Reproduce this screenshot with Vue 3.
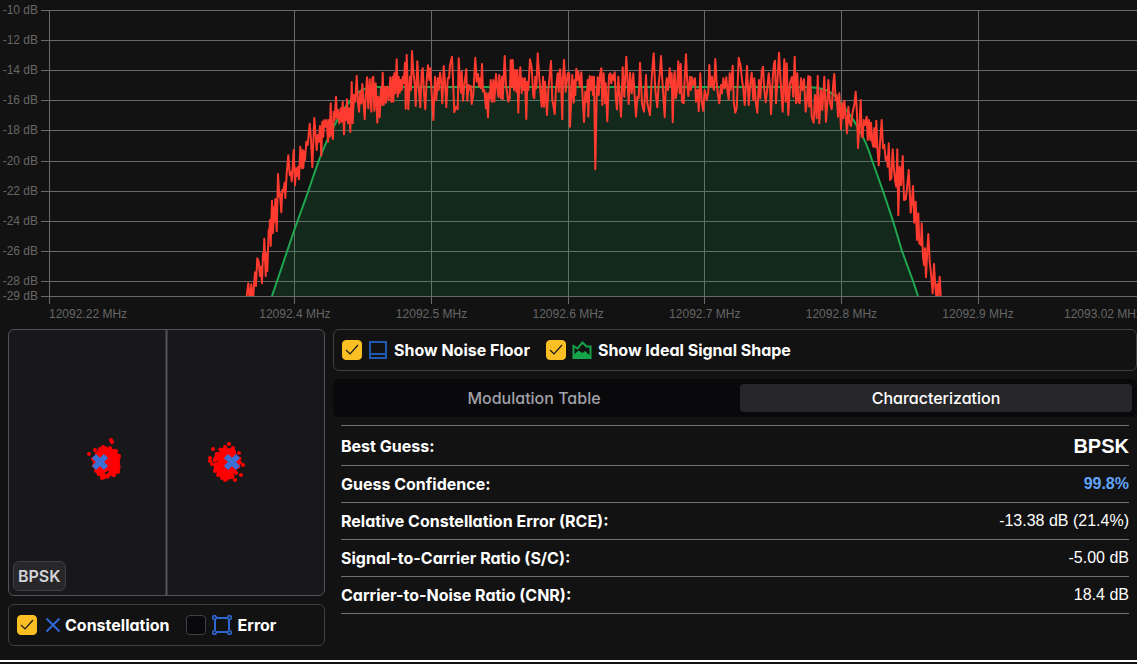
<script setup>
import { computed, ref } from 'vue'

// ── Axes ──────────────────────────────────────────────────────────────
const PLOT_W = 1093
const PLOT_H = 286
const freqMin = 12092.22
const freqMax = 12093.02
const dbMax = -10
const dbMin = -29

const freqTicks = [12092.22, 12092.4, 12092.5, 12092.6, 12092.7, 12092.8, 12092.9, 12093.02]
const dbTicks = [-10, -12, -14, -16, -18, -20, -22, -24, -26, -28, -29]

const freqPos = (f) => `${((f - freqMin) / (freqMax - freqMin)) * 100}%`
const dbPos = (db) => Math.round(((dbMax - db) / (dbMax - dbMin)) * PLOT_H)

function anchor(i) {
  if (i === 0) return 'start'
  return i === freqTicks.length - 1 ? 'end' : 'middle'
}

const sweeps = [
  {
    origin: [191, 30],
    samples: `20,768 25,730 28,768 31,768 34,733 37,768 40,768 42,735 45,697 48,738 52,655 56,665 60,708 62,680 66,730 69,640
    71,660 73,596 77,708 79,640 82,693 86,570 88,585 90,540 92,618 96,482 99,580 102,500 104,545 106,477 110,574 114,402
    118,470 120,460 124,517 127,450 130,455 134,428 136,474 140,400 145,346 149,405 152,395 155,424 157,400 161,330 165,436
    168,385 171,408 174,380 177,418 181,320 185,385 188,330 190,384 193,335 195,360 199,305 203,315 209,251 213,300 217,382
    223,234 227,290 230,330 233,285 236,305 240,258 244,347 247,245 250,290 253,240 257,260 260,240 264,305 267,240 269,290
    272,190 275,280 279,297 281,215 284,240 288,170 291,235 294,210 298,250 302,205 305,245 308,185 312,283 315,205 318,240
    321,178 324,250 327,205 331,276 335,126 338,250 342,165 346,185 350,108 354,190 357,215 361,155 364,190 367,132 374,238
    377,170 381,112 385,205 389,118 394,215 397,115 400,110 403,212 407,130 412,248 415,170 419,232 423,145 425,195 428,98
    431,195 435,140 438,188 441,140 446,180 451,112 454,185 458,110 460,185 463,100 466,160 470,58 473,170 476,110 479,158
    482,120 485,150 488,110 491,130 495,68 497,206 500,45 505,208 510,110 513,150 516,33 520,95 524,130 527,198 532,64
    536,140 541,202 545,95 548,85 552,160 556,208 560,120 564,76 568,120 571,85 575,160 580,240 585,110 589,180 593,115
    596,150 600,98 604,130 607,190 611,78 615,130 619,202 623,115 627,115 630,75 636,50 640,140 643,217 648,200 653,208`
  },
  {
    origin: [391, 30],
    samples: `56,55 60,130 63,158 65,95 69,182 73,135 79,88 82,182 86,135 90,150 92,138 95,192 100,165 106,53 110,125 114,102
    117,140 121,115 123,145 126,72 129,155 133,150 138,205 140,160 144,232 147,160 150,175 152,120 156,185 160,120 163,185
    168,102 171,135 175,170 178,105 182,175 186,110 188,178 194,48 198,135 205,185 209,175 212,60 216,140 218,60 222,150
    226,90 229,155 232,90 235,218 238,125 241,82 245,160 248,115 252,150 255,115 259,237 262,125 265,150 270,58 275,85
    280,168 283,175 286,110 289,145 293,40 298,115 302,165 305,200 309,110 312,200 315,125 321,225 325,150 333,63 337,180
    340,195 344,222 348,145 353,100 356,155 360,88 363,120 367,238 369,115 372,60 377,155 383,100 388,100 390,260 394,175
    397,105 401,188 404,120 406,165 409,86 412,120 415,95 419,140 424,97 428,175 432,246 436,155 440,185 443,120 445,230
    449,108 452,150 456,110 459,165 462,110 466,388 470,165 473,112 476,165 480,105 484,85 487,195 491,100 495,190 497,130
    502,244 507,105 511,100 514,130 518,105 521,120 524,97 527,170 531,208 535,110 539,170 543,230 548,82 553,170 559,50
    566,192 570,98 575,160 580,100 584,170 588,230 592,170 596,175 600,68 606,190 612,215 618,105 622,190 630,226 635,115
    641,40 646,150 652,202`
  },
  {
    origin: [591, 30],
    samples: `56,130 60,95 63,48 67,120 74,232 77,150 80,115 84,150 89,85 93,140 95,100 98,247 102,115 104,95 107,175 111,150
    115,64 119,160 122,72 126,185 131,190 134,115 138,43 142,130 145,168 150,110 153,150 156,112 160,135 165,115 168,185
    173,150 176,214 181,100 185,185 190,212 194,150 200,180 205,155 208,75 212,140 216,110 219,140 222,150 226,57 230,130
    234,165 238,190 243,135 246,160 250,115 254,145 259,112 263,160 266,178 269,100 272,150 278,77 281,185 286,218 290,205
    296,53 302,80 306,120 310,145 314,195 321,78 326,195 331,130 335,98 340,180 343,115 347,185 352,218 357,120 361,175
    365,95 369,80 373,150 377,187 382,145 386,100 390,140 393,223 398,115 402,70 405,62 408,190 413,110 417,38 422,130
    428,215 433,58 437,185 440,70 445,225 450,130 456,110 460,170 464,50 468,190 472,100 475,185 479,190 483,115 487,150
    492,118 497,215 501,180 505,108 508,200 511,110 515,230 521,248 525,165 530,235 533,108 538,250 543,150 547,210
    553,110 558,245 562,190 565,120 570,190 575,208 580,130 583,102 587,180 590,165 594,230 598,160 603,268 607,190
    610,235 613,182 617,230 621,280 625,200 629,250 633,258 638,215 643,195 647,155 651,220 654,324`
  },
  {
    origin: [751, 50],
    samples: `178,200 182,120 185,230 188,232 191,180 195,195 200,170 203,240 207,180 211,240 213,188 217,245 220,260 223,205
    226,262 229,182 232,260 236,316 240,250 245,180 249,265 253,255 257,300 261,290 263,320 266,250 270,360 274,355 278,268
    282,330 286,365 289,380 292,268 295,466 299,320 303,375 308,288 312,420 317,418 321,385 326,330 332,458 336,420 339,378
    343,488 347,425 351,540 355,460 358,550 363,555 365,490 369,590 372,615 375,565 378,652 382,570 385,522 389,605 393,640
    398,700 402,612 406,680 409,708 412,672 415,708 419,650 422,708`
  }
]

const spectrumPoints = sweeps
  .flatMap(({ origin, samples }) =>
    samples.trim().split(/\s+/).map((pair) => {
      const [x, y] = pair.split(',').map(Number)
      return `${(origin[0] + x / 3).toFixed(1)},${(origin[1] + y / 3).toFixed(1)}`
    })
  )
  .join(' ')

// ── Ideal raised-cosine shape ─────────────────────────────────────────
const idealCurve =
  'M223 286 L246 218 L259 182 Q265 164 270 150 Q277 132 283 120 Q292 102 301 91 Q311 77 326 77 ' +
  'L756 77 Q768 77 777 80 Q788 85 793 95 Q803 106 809 118 Q817 131 823 150 L834 181 L844 211 L853 241 L864 271 L869 286'

// ── Constellation ─────────────────────────────────────────────────────
let seed = 11
function rand() {
  seed = (seed * 16807) % 2147483647
  return seed / 2147483647
}

function cluster(cx, cy, rx, ry, count) {
  return Array.from({ length: count }, () => {
    const angle = rand() * Math.PI * 2
    const r = Math.pow(rand(), 0.7)
    return [cx + Math.cos(angle) * r * rx, cy + Math.sin(angle) * r * ry]
  })
}

const symbols = [
  ...cluster(98, 133, 13, 15, 240),
  ...cluster(218, 133, 13, 16, 200),
  [80, 124], [86, 120], [102, 110], [103, 112], [107, 121], [108, 125], [110, 126], [109, 142], [94, 117], [91, 119],
  [84, 129], [101, 118], [93, 148], [204, 119], [201, 128], [201, 131], [203, 134], [220, 114], [216, 117], [224, 118],
  [230, 123], [234, 135], [232, 145], [226, 150], [216, 150], [213, 148], [209, 145], [206, 141]
]
const idealSymbols = [[91, 132], [223, 132]]

const showNoiseFloor = ref(true)
const showIdealShape = ref(true)
const showConstellation = ref(true)
const showError = ref(false)

// ── Tabs ──────────────────────────────────────────────────────────────
const tabs = ['Modulation Table', 'Characterization']
const activeTab = ref('Characterization')

const modulation = ref('BPSK')
const rows = computed(() => [
  { label: 'Best Guess:', value: modulation.value, kind: 'best' },
  { label: 'Guess Confidence:', value: '99.8%', kind: 'confidence' },
  { label: 'Relative Constellation Error (RCE):', value: '-13.38 dB (21.4%)' },
  { label: 'Signal-to-Carrier Ratio (S/C):', value: '-5.00 dB' },
  { label: 'Carrier-to-Noise Ratio (CNR):', value: '18.4 dB' }
])
</script>

<template>
  <main class="analyzer">
    <div class="spectrum">
      <svg class="plot" role="img" aria-label="Signal spectrum">
        <g class="grid">
          <line v-for="db in dbTicks" :key="db" x1="-8" x2="100%" :y1="dbPos(db)" :y2="dbPos(db)" />
          <line v-for="f in freqTicks" :key="f" :x1="freqPos(f)" :x2="freqPos(f)" y1="0" y2="294" />
        </g>
        <svg width="100%" :height="PLOT_H" :viewBox="`0 0 ${PLOT_W} ${PLOT_H}`" preserveAspectRatio="none">
          <template v-if="showIdealShape">
            <path class="ideal-fill" :d="idealCurve + ' Z'" />
            <path class="ideal-line" :d="idealCurve" />
          </template>
          <polyline class="trace" :points="spectrumPoints" />
        </svg>
        <g class="ticks">
          <text v-for="db in dbTicks" :key="db" x="-11" :y="dbPos(db) + 4" text-anchor="end">{{ db }} dB</text>
          <text v-for="(f, i) in freqTicks" :key="f" :x="freqPos(f)" y="308" :text-anchor="anchor(i)">{{ f }} MHz</text>
        </g>
      </svg>
    </div>

    <div class="details">
      <section class="column">
        <div class="constellation">
          <svg viewBox="0 0 315 265" role="img" aria-label="Constellation diagram">
            <line class="axis" x1="157.500" x2="157.500" y1="0" y2="265" />
            <circle v-for="([x, y], i) in symbols" :key="i" class="symbol" :cx="x" :cy="y" r="2" />
            <g v-if="showConstellation" class="ideal-symbol">
              <path v-for="([x, y], i) in idealSymbols" :key="i" :d="`M${x - 6} ${y - 6}l12 12m0 -12l-12 12`" />
            </g>
          </svg>
          <span class="badge">{{ modulation }}</span>
        </div>

        <div class="options">
          <label class="option">
            <input v-model="showConstellation" type="checkbox" />
            <svg class="icon small blue" viewBox="0 0 16 16"><path d="M1.500 1.500l13 13m0-13l-13 13" /></svg>
            <span>Constellation</span>
          </label>
          <label class="option">
            <input v-model="showError" type="checkbox" />
            <svg class="icon blue" viewBox="0 0 20 20">
              <path d="M5 3h10M5 17h10M3 5v10M17 5v10" />
              <g class="handles">
                <circle cx="2.500" cy="2.500" r="1.800" /><circle cx="17.500" cy="2.500" r="1.800" />
                <circle cx="2.500" cy="17.500" r="1.800" /><circle cx="17.500" cy="17.500" r="1.800" />
              </g>
            </svg>
            <span>Error</span>
          </label>
        </div>
      </section>

      <section class="column">
        <div class="options">
          <label class="option">
            <input v-model="showNoiseFloor" type="checkbox" />
            <svg class="icon floor" viewBox="0 0 20 20"><path d="M2 2h16v16H2zM2 14h16" /></svg>
            <span>Show Noise Floor</span>
          </label>
          <label class="option">
            <input v-model="showIdealShape" type="checkbox" />
            <svg class="icon shape" viewBox="0 0 20 20">
              <path class="outline" d="M1.500 6l4 2.500 5-6 4 4h4v11.500h-17z" />
              <path class="area" d="M1.500 15l5-4.500 4 2.500 2.500-2 5.500 5v2h-17z" />
            </svg>
            <span>Show Ideal Signal Shape</span>
          </label>
        </div>

        <div class="tabs" role="tablist">
          <button
            v-for="tab in tabs"
            :key="tab"
            type="button"
            role="tab"
            :aria-selected="activeTab === tab"
            :class="{ active: activeTab === tab }"
            @click="activeTab = tab"
          >
            {{ tab }}
          </button>
        </div>

        <div class="table-wrap">
          <table>
            <tbody>
              <tr v-for="row in rows" :key="row.label" :class="row.kind">
                <th scope="row">{{ row.label }}</th>
                <td>{{ row.value }}</td>
              </tr>
            </tbody>
          </table>
        </div>
      </section>
    </div>
  </main>
</template>

<style>
body {
  background: #121212;
}
</style>

<style scoped>
.analyzer {
  background: #121212;
  color: #fff;
  font-family: Inter, 'Liberation Sans', sans-serif;
  font-size: 16px;
  line-height: 24px;
  border-bottom: 2px solid #fff;
  overflow: hidden;
}

/* ── Spectrum ─── */
.spectrum {
  padding: 10px 0 0 49px;
  margin-right: -5px;
}
.plot {
  display: block;
  width: 100%;
  height: 319px;
  overflow: visible;
}
.grid line {
  stroke: #6a6a6a;
  stroke-width: 1;
  shape-rendering: crispEdges;
}
.ideal-fill { fill: #16a34a; fill-opacity: .16; }
.ideal-line { fill: none; stroke: #1fa750; stroke-width: 2; }
.trace {
  fill: none;
  stroke: #ff3b30;
  stroke-width: 2;
  stroke-linejoin: round;
}
.ticks text {
  fill: #666;
  font-family: 'Liberation Sans', sans-serif;
  font-size: 12px;
}

/* ── Lower panels ─── */
.details {
  display: grid;
  grid-template-columns: 317px minmax(0, 1fr);
  gap: 8px;
  padding: 0 0 14px 8px;
}
.column {
  display: flex;
  flex-direction: column;
  gap: 8px;
  min-width: 0;
}
.constellation {
  position: relative;
  background: #18181b;
  border: 1px solid #52525b;
  border-radius: 6px;
  overflow: hidden;
}
.constellation svg { display: block; width: 100%; }
.axis { stroke: #52525b; stroke-width: 2; }
.symbol { fill: #f00; }
.ideal-symbol path { stroke: #3b6fd4; stroke-width: 6; }
.badge {
  position: absolute;
  left: 4px;
  bottom: 4px;
  padding: 2px 4px;
  background: #27272a;
  border: 1px solid #3f3f46;
  border-radius: 6px;
  color: #d4d4d8;
  font-weight: 600;
}

/* ── Options ─── */
.options {
  display: flex;
  gap: 16px;
  padding: 8px;
  border: 1px solid #3f3f46;
  border-radius: 6px;
}
.option {
  display: flex;
  align-items: center;
  font-weight: 700;
  font-feature-settings: 'cv11';
  white-space: nowrap;
  cursor: pointer;
}
.option input {
  appearance: none;
  width: 20px;
  height: 20px;
  margin: 0 6px 0 0;
  background: #09090b;
  border: 1px solid #3f3f46;
  border-radius: 4px;
  cursor: pointer;
}
.option input:checked {
  border-color: #fbbf24;
  background: #fbbf24 url("data:image/svg+xml,%3Csvg xmlns='http://www.w3.org/2000/svg' viewBox='0 0 18 18' fill='none' stroke='%2318181b' stroke-width='1.200'%3E%3Cpath d='M3 9l4 4 8-9'/%3E%3C/svg%3E");
}
.icon {
  width: 20px;
  height: 20px;
  margin-right: 6px;
  fill: none;
  stroke-width: 2;
}
.icon.small {
  width: 16px;
  height: 16px;
  margin: 0 4px 0 2px;
}
.blue { stroke: #2f67d0; }
.handles { stroke-width: 1.6; }
.floor { stroke: #2058b0; }
.shape .outline { stroke: #16a34a; }
.shape .area { fill: #16a34a; }

/* ── Tabs ─── */
.tabs {
  display: grid;
  grid-template-columns: 1fr 1fr;
  gap: 10px;
  padding: 5px;
  background: #09090b;
  border-radius: 6px;
}
.tabs button {
  height: 28px;
  padding: 0;
  border: 0;
  border-radius: 4px;
  background: transparent;
  color: #a1a1aa;
  font: inherit;
  font-weight: 500;
  font-feature-settings: 'cv11';
  cursor: pointer;
}
.tabs button.active { background: #27272a; color: #fff; }

/* ── Table ─── */
.table-wrap { padding: 0 8px; }
table {
  width: 100%;
  border-collapse: collapse;
  border-top: 1px solid #71717a;
}
tr { height: 37px; border-bottom: 1px solid #71717a; }
tr.best { height: 40px; }
th, td { padding: 0; }
th {
  text-align: left;
  font-weight: 700;
  font-feature-settings: 'cv11';
}
td {
  text-align: right;
  font-family: 'Liberation Sans', sans-serif;
}
.best td { font-size: 20px; font-weight: 700; }
.confidence td { color: #60a5fa; font-weight: 700; }
</style>
